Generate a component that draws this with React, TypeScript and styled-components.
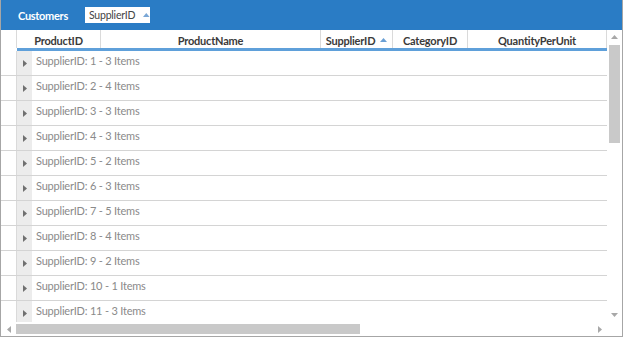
import React from "react";
import styled, { createGlobalStyle } from "styled-components";

const GlobalStyle = createGlobalStyle`
  html, body {
    margin: 0;
    padding: 0;
    background: #ffffff;
  }
  body {
    font-family: Lato, "Open Sans", sans-serif;
  }
`;

interface IColumn {
  title: string;
  width: number;
  sorted?: boolean;
}

const columns: IColumn[] = [
  { title: "ProductID", width: 84 },
  { title: "ProductName", width: 220 },
  { title: "SupplierID", width: 72, sorted: true },
  { title: "CategoryID", width: 75 },
  { title: "QuantityPerUnit", width: 139 },
];

const groups = [
  { id: 1, count: 3 },
  { id: 2, count: 4 },
  { id: 3, count: 3 },
  { id: 4, count: 3 },
  { id: 5, count: 2 },
  { id: 6, count: 3 },
  { id: 7, count: 5 },
  { id: 8, count: 4 },
  { id: 9, count: 2 },
  { id: 10, count: 1 },
  { id: 11, count: 3 },
];

const SortArrow: React.FC<{ color?: string }> = ({ color = "#6a9fd4" }) => (
  <svg width="7" height="4" viewBox="0 0 7 4">
    <path d="M0 4 L3.5 0 L7 4 Z" fill={color} />
  </svg>
);

const App: React.FC = () => {
  return (
    <>
      <GlobalStyle />
      <Grid>
        <GroupPanel>
          <PanelTitle>Customers</PanelTitle>
          <GroupChip>
            SupplierID
            <SortArrow color="#7aa7d6" />
          </GroupChip>
        </GroupPanel>
        <Body>
          <Viewport>
            <HeaderRow>
              <IndentCell />
              {columns.map((c) => (
                <HeaderCell key={c.title} $width={c.width}>
                  {c.title}
                  {c.sorted && <SortArrow />}
                </HeaderCell>
              ))}
            </HeaderRow>
            <HeaderUnderline />
            <Rows>
              {groups.map((g) => (
                <GroupRow key={g.id}>
                  <IndentCell />
                  <Expander>
                    <svg width="4" height="7" viewBox="0 0 4 7">
                      <path d="M0 0 L4 3.5 L0 7 Z" fill="#707070" />
                    </svg>
                  </Expander>
                  <GroupText>
                    SupplierID: {g.id} - {g.count} Items
                  </GroupText>
                </GroupRow>
              ))}
            </Rows>
          </Viewport>
          <VScroll>
            <ArrowBtn>
              <svg width="7" height="4" viewBox="0 0 7 4">
                <path d="M0 4 L3.5 0 L7 4 Z" fill="#a8a8a8" />
              </svg>
            </ArrowBtn>
            <VTrack>
              <VThumb />
            </VTrack>
            <ArrowBtn>
              <svg width="7" height="4" viewBox="0 0 7 4">
                <path d="M0 0 L3.5 4 L7 0 Z" fill="#a8a8a8" />
              </svg>
            </ArrowBtn>
          </VScroll>
          <HScroll>
            <HArrowBtn>
              <svg width="4" height="7" viewBox="0 0 4 7">
                <path d="M4 0 L0 3.5 L4 7 Z" fill="#a8a8a8" />
              </svg>
            </HArrowBtn>
            <HTrack>
              <HThumb />
            </HTrack>
            <HArrowBtn>
              <svg width="4" height="7" viewBox="0 0 4 7">
                <path d="M0 0 L4 3.5 L0 7 Z" fill="#a8a8a8" />
              </svg>
            </HArrowBtn>
          </HScroll>
          <Corner />
        </Body>
      </Grid>
    </>
  );
};

const Grid = styled.div`
  width: 621px;
  height: 336px;
  border: 1px solid #a6a6a6;
  border-top: none;
  display: flex;
  flex-direction: column;
  background: #fff;
  overflow: hidden;
`;

const GroupPanel = styled.div`
  height: 30px;
  flex: 0 0 30px;
  background: #2a7cc5;
  display: flex;
  align-items: center;
  gap: 17px;
  padding: 0 0 0 18px;
  margin: 0 -1px;
`;

const PanelTitle = styled.span`
  color: #fff;
  font-weight: 700;
  font-size: 11px;
  letter-spacing: -0.3px;
`;

const GroupChip = styled.div`
  background: #fff;
  height: 16px;
  width: 65px;
  box-sizing: border-box;
  padding: 0 0 0 4px;
  display: flex;
  align-items: center;
  gap: 8px;
  font-size: 10.5px;
  color: #444;
  letter-spacing: -0.2px;
`;

const Body = styled.div`
  flex: 1;
  display: grid;
  grid-template-columns: 606px 15px;
  grid-template-rows: 1fr 14px;
  min-height: 0;
`;

const Viewport = styled.div`
  overflow: hidden;
  display: flex;
  flex-direction: column;
`;

const HeaderRow = styled.div`
  display: flex;
  height: 18px;
  flex: 0 0 18px;
`;

const IndentCell = styled.div`
  width: 15px;
  flex: 0 0 15px;
  border-right: 1px solid #dadada;
`;

const HeaderCell = styled.div<{ $width: number }>`
  width: ${(p) => p.$width}px;
  flex: 0 0 ${(p) => p.$width}px;
  border-right: 1px solid #dadada;
  display: flex;
  align-items: center;
  justify-content: center;
  gap: 5px;
  padding-top: 2px;
  box-sizing: border-box;
  font-size: 11px;
  font-weight: 700;
  color: #3a3a3a;
  letter-spacing: -0.2px;
`;

const HeaderUnderline = styled.div`
  height: 3px;
  flex: 0 0 3px;
  margin-left: 16px;
  background: #5fa0da;
`;

const Rows = styled.div`
  display: flex;
  flex-direction: column;
`;

const GroupRow = styled.div`
  display: flex;
  height: 24px;
  flex: 0 0 24px;
  border-bottom: 1px solid #d4d4d4;
`;

const Expander = styled.div`
  width: 15px;
  flex: 0 0 15px;
  background: #ececec;
  display: flex;
  align-items: center;
  justify-content: center;
`;

const GroupText = styled.div`
  display: flex;
  align-items: center;
  padding: 0 0 5px 4px;
  font-size: 11px;
  color: #8a8a8a;
  letter-spacing: -0.2px;
`;

const VScroll = styled.div`
  display: flex;
  flex-direction: column;
  background: #fff;
`;

const ArrowBtn = styled.div`
  height: 14px;
  flex: 0 0 14px;
  display: flex;
  align-items: center;
  justify-content: center;
`;

const VTrack = styled.div`
  flex: 1;
  padding: 1px 2px;
`;

const VThumb = styled.div`
  height: 98px;
  background: #c9c9c9;
`;

const HScroll = styled.div`
  display: flex;
  background: #fff;
`;

const HArrowBtn = styled.div`
  width: 15px;
  flex: 0 0 15px;
  display: flex;
  align-items: center;
  justify-content: center;
`;

const HTrack = styled.div`
  flex: 1;
  padding: 2px 0;
`;

const HThumb = styled.div`
  width: 344px;
  height: 100%;
  background: #c9c9c9;
`;

const Corner = styled.div`
  background: #fff;
`;

export default App;
